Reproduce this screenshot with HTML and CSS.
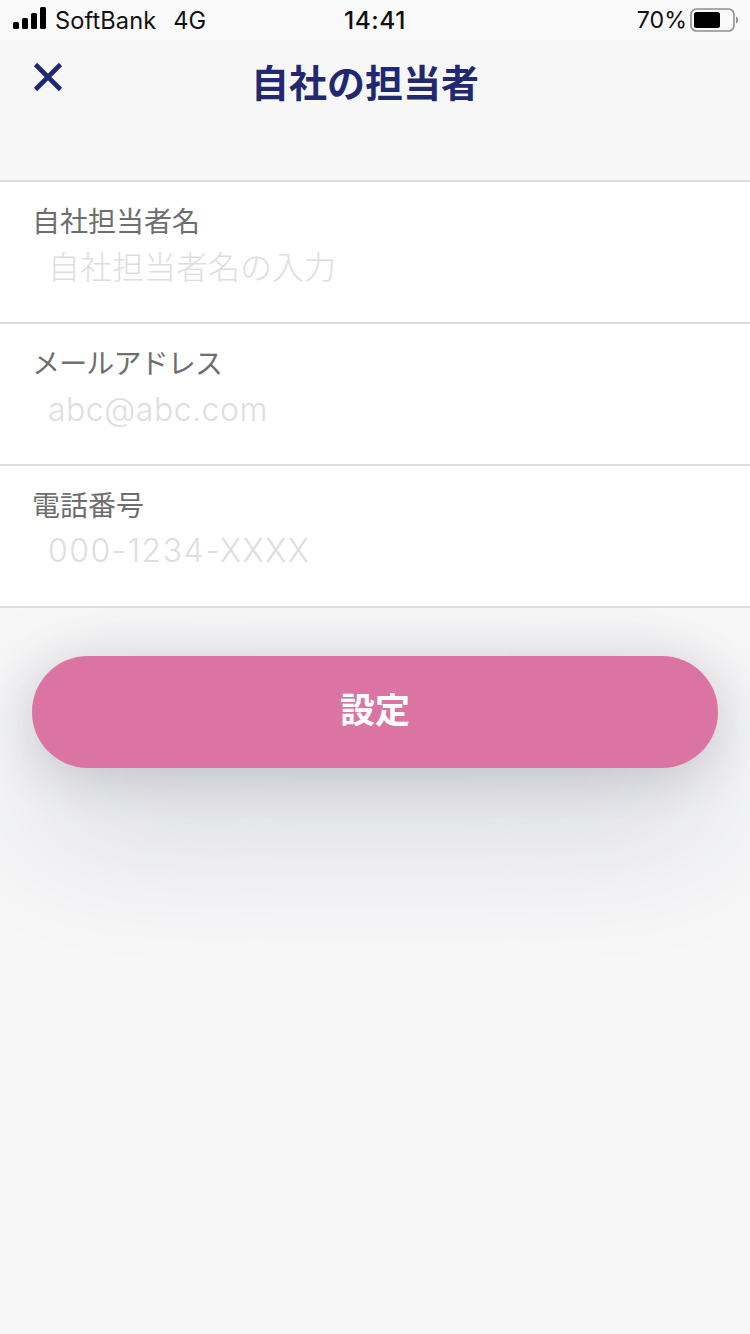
FILE: index.html
```html
<!DOCTYPE html>
<html lang="ja">
<head>
<meta charset="utf-8">
<title>自社の担当者</title>
<link rel="stylesheet" href="styles.css">
</head>
<body>
<div class="status">
  <div class="status-left">
    <svg class="signal" width="34" height="22" viewBox="0 0 34 22"><rect x="0" y="15" width="6" height="7" rx="1.5"/><rect x="9" y="11" width="6" height="11" rx="1.5"/><rect x="18" y="6" width="6" height="16" rx="1.5"/><rect x="27" y="0" width="6" height="22" rx="1.5"/></svg>
    <span class="carrier">SoftBank</span>
    <span class="net">4G</span>
  </div>
  <div class="time">14:41</div>
  <div class="status-right">
    <span class="pct">70%</span>
    <svg class="battery" width="48" height="24" viewBox="0 0 48 24"><rect x="1" y="1" width="43" height="22" rx="5.5" fill="none" stroke="#8e8e8e" stroke-width="1.6"/><rect x="4" y="4" width="26" height="16" rx="2.5" fill="#000"/><path d="M46 8.5c1.2.4 2 1.800 2 3.500s-.8 3.100-2 3.500z" fill="#8e8e8e"/></svg>
  </div>
</div>
<header class="nav">
  <svg class="close" width="30" height="30" viewBox="0 0 30 30"><path d="M2.500 2.500L27.500 27.500M27.500 2.500L2.500 27.500" fill="none" stroke="#22286f" stroke-width="4.600"/></svg>
  <h1 class="title">自社の担当者</h1>
</header>
<main class="form">
  <section class="row">
    <div class="label">自社担当者名</div>
    <div class="ph ph-name">自社担当者名の入力</div>
  </section>
  <section class="row">
    <div class="label label-kana">メールアドレス</div>
    <div class="ph ph-mail">abc@abc.com</div>
  </section>
  <section class="row">
    <div class="label">電話番号</div>
    <div class="ph ph-phone">000-1234-XXXX</div>
  </section>
</main>
<div class="action">
  <button class="submit" type="button">設定</button>
</div>
</body>
</html>
```
FILE: styles.css
```css
* { box-sizing: border-box; }
html, body { margin: 0; padding: 0; }
body {
  width: 750px;
  height: 1334px;
  overflow: hidden;
  background: #f7f7f8;
  font-family: "Inter", "Noto Sans CJK JP", sans-serif;
}
.status {
  height: 40px;
  background: #f9f9f9;
  display: grid;
  grid-template-columns: 1fr auto 1fr;
  align-items: center;
  padding: 0 12px 0 13px;
  color: #111;
  font-size: 23.600px;
}
.status-left { display: flex; align-items: center; }
.signal { fill: #000; margin-right: 8px; margin-top: -4px; }
.carrier { letter-spacing: 0.1px; }
.net { margin-left: 17px; }
.time { font-weight: 500; font-size: 24.500px; letter-spacing: 0.5px; margin-right: 1px; }
.status-right { display: flex; justify-content: flex-end; align-items: center; gap: 3px; }
.pct { font-size: 23.200px; }
.nav {
  height: 140px;
  padding: 5px 0 0 33px;
  display: flex;
  position: relative;
}
.close { margin-top: 17px; }
.title {
  position: absolute;
  left: 0;
  right: 20px;
  top: 15px;
  margin: 0;
  text-align: center;
  font-family: "Noto Sans CJK JP", sans-serif;
  font-size: 38px;
  line-height: 52px;
  font-weight: 700;
  color: #22286f;
}
.form { border-top: 2px solid #dddddd; position: relative; z-index: 1; }
.row {
  height: 142px;
  background: #fff;
  border-bottom: 2px solid #dddddd;
  padding: 19px 0 0 33px;
}
.label {
  font-family: "Noto Sans CJK JP", sans-serif;
  font-size: 28px;
  line-height: 38px;
  color: #6e6e6e;
  margin-left: -1px;
}
.label-kana { letter-spacing: -0.850px; }
.ph {
  font-family: "Inter", "Noto Sans CJK JP", sans-serif;
  font-weight: 300;
  font-size: 32px;
  line-height: 44px;
  margin: 7px 0 0 15px;
  color: #dedede;
}
.ph-name { font-family: "Noto Sans CJK JP", sans-serif; margin: 4px 0 0 15px; }
.ph-mail { letter-spacing: 0.500px; }
.ph-phone { letter-spacing: 1.450px; margin-top: 6px; }
.action { padding: 48px 32px 0; }
.submit {
  display: block;
  width: 686px;
  height: 112px;
  border: 0;
  padding: 0 0 10px;
  border-radius: 56px;
  background: #db73a3;
  color: #fff;
  font-family: "Noto Sans CJK JP", sans-serif;
  font-size: 35px;
  font-weight: 700;
  box-shadow: 0 8px 50px rgba(40, 44, 60, 0.19), 0 60px 140px rgba(40, 46, 80, 0.16);
}
```
